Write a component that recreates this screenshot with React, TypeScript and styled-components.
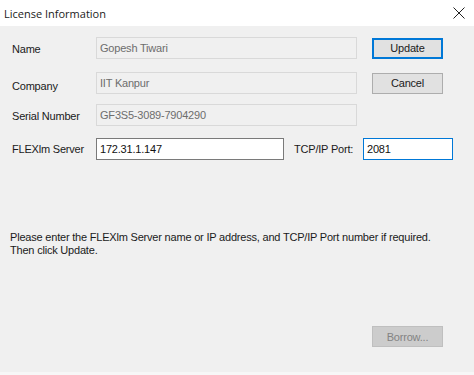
import React from "react";
import styled, { createGlobalStyle } from "styled-components";

const Global = createGlobalStyle`
  html, body { margin: 0; padding: 0; background: #f0f0f0; }
  body { font-family: "Liberation Sans", Arial, sans-serif; }
`;

const Window = styled.div`
  width: 474px;
  height: 375px;
  display: flex;
  flex-direction: column;
  background: #f0f0f0;
  box-sizing: border-box;
  border-bottom: 3px solid #f7f7f7;
`;

const TitleBar = styled.div`
  height: 26px;
  flex: none;
  background: #ffffff;
  display: flex;
  align-items: center;
  justify-content: space-between;
  padding: 0 9px 0 4px;
  font-family: "Open Sans", "Noto Sans", sans-serif;
  font-size: 11px;
  color: #1a1a1a;
`;

const Body = styled.div`
  flex: 1;
  display: flex;
  flex-direction: column;
  padding: 11px 0 0 12px;
  font-size: 11px;
  letter-spacing: -0.2px;
  color: #1a1a1a;
`;

const Row = styled.div<{ $mt?: number }>`
  display: flex;
  align-items: center;
  height: 22px;
  margin-top: ${(p) => p.$mt ?? 0}px;
`;

const Label = styled.div<{ $w?: number; $dy?: number }>`
  width: ${(p) => p.$w ?? 84}px;
  flex: none;
  position: relative;
  top: ${(p) => p.$dy ?? 0}px;
`;

const Field = styled.div<{ $w: number; $mode: "readonly" | "edit" | "focus" }>`
  width: ${(p) => p.$w}px;
  height: 22px;
  box-sizing: border-box;
  flex: none;
  display: flex;
  align-items: center;
  padding-left: 3px;
  border: 1px solid
    ${(p) =>
      p.$mode === "readonly" ? "#d9d9d9" : p.$mode === "focus" ? "#0078d7" : "#7a7a7a"};
  background: ${(p) => (p.$mode === "readonly" ? "#f0f0f0" : "#ffffff")};
  color: ${(p) => (p.$mode === "readonly" ? "#6d6d6d" : "#111111")};
`;

const Button = styled.div<{ $variant: "default" | "normal" | "disabled" }>`
  width: 71px;
  height: 21px;
  box-sizing: border-box;
  flex: none;
  display: flex;
  align-items: center;
  justify-content: center;
  background: ${(p) => (p.$variant === "disabled" ? "#cccccc" : "#e1e1e1")};
  border: ${(p) =>
    p.$variant === "default"
      ? "2px solid #0078d7"
      : p.$variant === "disabled"
      ? "1px solid #bfbfbf"
      : "1px solid #adadad"};
  color: ${(p) => (p.$variant === "disabled" ? "#838383" : "#1a1a1a")};
`;

const Spacer = styled.div<{ $w: number }>`
  width: ${(p) => p.$w}px;
  flex: none;
`;

const Message = styled.div`
  margin-top: 71px;
  margin-left: -2px;
  line-height: 13px;
`;

const Footer = styled.div`
  margin-top: auto;
  margin-bottom: 25px;
  display: flex;
  justify-content: flex-end;
  padding-right: 31px;
`;

const CloseIcon = () => (
  <svg width="12" height="12" viewBox="0 0 12 12">
    <path d="M0.5 0.5 L11.5 11.5 M11.5 0.5 L0.5 11.5" stroke="#222" strokeWidth="1" />
  </svg>
);

export default function App() {
  return (
    <>
      <Global />
      <Window>
        <TitleBar>
          <span>License Information</span>
          <CloseIcon />
        </TitleBar>
        <Body>
          <Row>
            <Label $dy={1}>Name</Label>
            <Field $w={261} $mode="readonly">Gopesh Tiwari</Field>
            <Spacer $w={15} />
            <Button $variant="default">Update</Button>
          </Row>
          <Row $mt={13}>
            <Label $dy={3}>Company</Label>
            <Field $w={261} $mode="readonly">IIT Kanpur</Field>
            <Spacer $w={15} />
            <Button $variant="normal">Cancel</Button>
          </Row>
          <Row $mt={10}>
            <Label $dy={1}>Serial Number</Label>
            <Field $w={261} $mode="readonly">GF3S5-3089-7904290</Field>
          </Row>
          <Row $mt={12}>
            <Label $dy={0}>FLEXlm Server</Label>
            <Field $w={188} $mode="edit">172.31.1.147</Field>
            <Spacer $w={10} />
            <Label $w={69}>TCP/IP Port:</Label>
            <Field $w={90} $mode="focus">2081</Field>
          </Row>
          <Message>
            Please enter the FLEXlm Server name or IP address, and TCP/IP Port number if required.
            <br />
            Then click Update.
          </Message>
          <Footer>
            <Button $variant="disabled">Borrow...</Button>
          </Footer>
        </Body>
      </Window>
    </>
  );
}
